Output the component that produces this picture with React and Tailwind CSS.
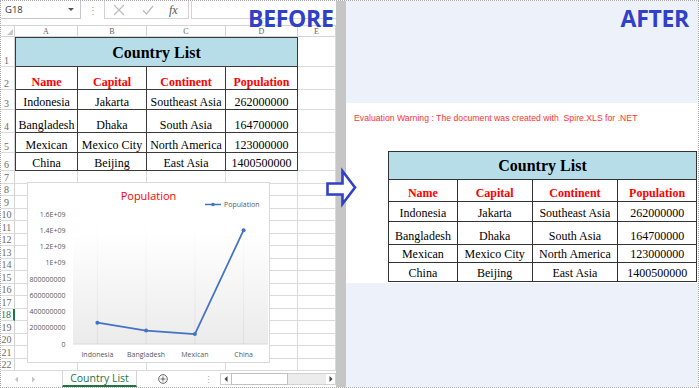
import React from "react";

const SERIF = "font-['Liberation_Serif',serif]";
const SANS = "font-['Open_Sans',sans-serif]";

const COLW = ["w-[63px]", "w-[69px]", "w-[79px]", "w-[72px]"];
const RCOLW = ["w-[69px]", "w-[75px]", "w-[86px]", "w-[79px]"];
const LROWH = ["h-[23px]", "h-[20px]", "h-[23px]", "h-[20px]", "h-[18px]"];
const RROWH = ["h-[22px]", "h-[20px]", "h-[23px]", "h-[18px]", "h-[19px]"];

const HEAD = ["Name", "Capital", "Continent", "Population"];
const DATA = [
  ["Indonesia", "Jakarta", "Southeast Asia", "262000000"],
  ["Bangladesh", "Dhaka", "South Asia", "164700000"],
  ["Mexican", "Mexico City", "North America", "123000000"],
  ["China", "Beijing", "East Asia", "1400500000"],
];

function RowHead({ n, active }) {
  return (
    <div
      className={`w-[14px] shrink-0 border-b border-b-[#dadada] flex items-end justify-center pr-[2px] ${SERIF} text-[10px] leading-[11px] ${
        active ? "border-r-2 border-r-[#217346] text-[#217346]" : "border-r border-r-[#d4d4d4] text-[#6b6b6b]"
      }`}
    >
      {n}
    </div>
  );
}

function FormulaBar() {
  return (
    <div className="h-[25px] shrink-0 flex items-start border-b border-[#d4d4d4]">
      <div className="w-[80px] h-[18px] border-r border-b border-[#c6c6c6] flex items-center pl-[4px] pr-[6px]">
        <span className={`${SANS} text-[9.5px] leading-[12px] text-[#333]`}>G18</span>
        <span className="ml-auto w-0 h-0 border-l-[3px] border-r-[3px] border-t-[3px] border-l-transparent border-r-transparent border-t-[#555]" />
      </div>
      <div className="w-[23px] h-[18px] flex items-center justify-center text-[#a0a0a0] text-[10px] leading-[10px]">⋮</div>
      <div className="w-[85px] h-[18px] border border-t-0 border-[#d4d4d4] flex items-center">
        <svg className="ml-[8px]" width="12" height="12" viewBox="0 0 12 12">
          <path d="M1 1 L11 11 M11 1 L1 11" stroke="#bdbdbd" strokeWidth="1.2" fill="none" />
        </svg>
        <svg className="ml-[17px]" width="12" height="12" viewBox="0 0 12 12">
          <path d="M1 6.5 L4.5 10 L11 2" stroke="#bdbdbd" strokeWidth="1.3" fill="none" />
        </svg>
        <span className={`ml-[15px] ${SERIF} italic text-[12px] leading-[12px] text-[#555]`}>fx</span>
      </div>
      <div className="ml-[2px] flex-1 h-[18px] border-l border-b border-[#d4d4d4]" />
    </div>
  );
}

function ColHeaders() {
  const letters = ["A", "B", "C", "D"];
  return (
    <div className="h-[11px] shrink-0 flex border-b border-[#d4d4d4]">
      <div className="w-[14px] border-r border-[#d4d4d4] flex items-end justify-end pr-[1px] pb-[1px]">
        <span className="w-0 h-0 border-l-[6px] border-t-[6px] border-l-transparent border-t-transparent border-b-0 border-r-0 [border-bottom:6px_solid_#c8c8c8]" />
      </div>
      {letters.map((l, i) => (
        <div
          key={l}
          className={`${COLW[i]} border-r border-[#d4d4d4] flex items-end justify-center ${SERIF} text-[8px] leading-[9px] text-[#666]`}
        >
          {l}
        </div>
      ))}
      <div className={`flex-1 border-r border-[#d4d4d4] flex items-end justify-center ${SERIF} text-[8px] leading-[9px] text-[#666]`}>
        E
      </div>
    </div>
  );
}

function Chart() {
  const ylabels = ["1.6E+09", "1.4E+09", "1.2E+09", "1E+09", "800000000", "600000000", "400000000", "200000000", "0"];
  const cats = ["Indonesia", "Bangladesh", "Mexican", "China"];
  const vals = [262000000, 164700000, 123000000, 1400500000];
  const xs = [70.4, 119.1, 167.9, 216.6];
  const ys = vals.map((v) => 162 - (v / 1.6e9) * 130);
  const pts = xs.map((x, i) => `${x},${ys[i]}`).join(" ");
  return (
    <div className="absolute left-[26px] top-[181px] w-[243px] h-[181px]">
      <svg width="243" height="181" viewBox="0 0 243 181" fontFamily="'Open Sans', sans-serif">
        <defs>
          <linearGradient id="pg" x1="0" y1="0" x2="0" y2="1">
            <stop offset="0" stopColor="#ffffff" />
            <stop offset="0.15" stopColor="#ffffff" />
            <stop offset="1" stopColor="#ebebeb" />
          </linearGradient>
          <linearGradient id="vl" x1="0" y1="0" x2="0" y2="1">
            <stop offset="0" stopColor="#ffffff" />
            <stop offset="1" stopColor="#dcdcdc" />
          </linearGradient>
        </defs>
        <rect x="0.5" y="0.5" width="242" height="180" fill="#ffffff" stroke="#d9d9d9" />
        <rect x="46" y="32" width="195" height="130" fill="url(#pg)" />
        {xs.map((x) => (
          <rect key={x} x={x - 0.5} y="40" width="1" height="122" fill="url(#vl)" />
        ))}
        <line x1="46" y1="162" x2="241" y2="162" stroke="#d9d9d9" strokeWidth="1" />
        <text x="121.5" y="17.5" textAnchor="middle" fontSize="11" fill="#ff0000">
          Population
        </text>
        <line x1="178" y1="22.5" x2="194" y2="22.5" stroke="#4472c4" strokeWidth="1.5" />
        <circle cx="186" cy="22.5" r="1.8" fill="#4472c4" />
        <text x="197" y="25" fontSize="7" fill="#595959">
          Population
        </text>
        {ylabels.map((l, i) => (
          <text key={l} x="38.5" y={32 + i * 16.25 + 2.5} textAnchor="end" fontSize="7" fill="#595959">
            {l}
          </text>
        ))}
        {cats.map((c, i) => (
          <text key={c} x={xs[i]} y="174.5" textAnchor="middle" fontSize="7" fill="#595959">
            {c}
          </text>
        ))}
        <polyline points={pts} fill="none" stroke="#4472c4" strokeWidth="1.75" strokeLinejoin="round" />
        {xs.map((x, i) => (
          <circle key={x} cx={x} cy={ys[i]} r="2" fill="#4472c4" />
        ))}
      </svg>
    </div>
  );
}

function TabBar() {
  return (
    <div className="h-[16px] shrink-0 flex items-stretch bg-white">
      <div className="w-[61px] flex items-center">
        <svg className="ml-[13px]" width="5" height="7" viewBox="0 0 5 7">
          <path d="M4 0.5 L1 3.5 L4 6.5 Z" fill="#c4c4c4" />
        </svg>
        <svg className="ml-[12px]" width="5" height="7" viewBox="0 0 5 7">
          <path d="M1 0.5 L4 3.5 L1 6.5 Z" fill="#c4c4c4" />
        </svg>
      </div>
      <div className={`w-[75px] bg-white border-l border-r border-[#d4d4d4] border-b-2 border-b-[#217346] flex items-center justify-center ${SANS} text-[10.5px] leading-[13px] text-[#217346]`}>
        Country List
      </div>
      <div className="ml-[21px] flex items-center">
        <svg width="10" height="10" viewBox="0 0 10 10">
          <circle cx="5" cy="5" r="4.3" fill="none" stroke="#555" strokeWidth="0.9" />
          <path d="M5 2.5 V7.5 M2.5 5 H7.5" stroke="#555" strokeWidth="0.9" />
        </svg>
      </div>
      <div className="ml-[38px] w-[4px] flex items-center justify-center text-[#a8a8a8] text-[9px] leading-[9px]">⋮</div>
      <div className="ml-[10px] flex-1 flex items-center">
        <div className="h-[12px] flex-1 flex items-stretch">
          <div className="w-[11px] flex items-center justify-center border border-r-0 border-[#d0d0d0] bg-white">
            <svg width="4" height="6" viewBox="0 0 4 6">
              <path d="M3.5 0 L0.5 3 L3.5 6 Z" fill="#444" />
            </svg>
          </div>
          <div className="w-[57px] bg-white border border-[#c0c0c0]" />
          <div className="flex-1 bg-[#ececec] border-t border-b border-[#d0d0d0]" />
          <div className="w-[10px] flex items-center justify-center bg-white border border-l-0 border-[#d0d0d0]">
            <svg width="4" height="6" viewBox="0 0 4 6">
              <path d="M0.5 0 L3.5 3 L0.5 6 Z" fill="#444" />
            </svg>
          </div>
        </div>
      </div>
    </div>
  );
}

function LeftPanel() {
  return (
    <div className="relative w-[335px] shrink-0 h-full flex flex-col bg-white">
      <FormulaBar />
      <ColHeaders />
      <div className="flex h-[30px] shrink-0">
        <RowHead n={1} />
        <div
          className={`w-[283px] border border-[#3a3a3a] bg-[#b7dee8] flex items-center justify-center pt-[2px] ${SERIF} font-bold text-[16px] leading-[18px] text-black`}
        >
          Country List
        </div>
        <div className="flex-1 border-r border-b border-[#dadada]" />
      </div>
      {[HEAD, ...DATA].map((r, i) => (
        <div key={i} className={`flex shrink-0 ${LROWH[i]}`}>
          <RowHead n={i + 2} />
          {r.map((c, j) => (
            <div
              key={j}
              className={`${COLW[j]} ${j === 0 ? "border-l" : ""} border-r border-b border-[#3a3a3a] flex items-end justify-center whitespace-nowrap ${SERIF} text-[12px] leading-[14px] ${
                i === 0 ? "font-bold text-[#ff0000]" : "text-black"
              }`}
            >
              {c}
            </div>
          ))}
          <div className="flex-1 border-r border-b border-[#dadada]" />
        </div>
      ))}
      {Array.from({ length: 16 }).map((_, k) => {
        const n = k + 7;
        return (
          <div key={n} className={`flex shrink-0 ${k % 2 === 0 ? "h-[13px]" : "h-[12px]"}`}>
            <RowHead n={n} active={n === 18} />
            {COLW.map((w, j) => (
              <div key={j} className={`${w} border-r border-b border-[#dadada]`} />
            ))}
            <div className="flex-1 border-r border-b border-[#dadada]" />
          </div>
        );
      })}
      <TabBar />
      <Chart />
      <div className={`absolute left-[247px] top-[9px] ${SANS} font-bold text-[23px] leading-[16px] tracking-[-0.3px] text-[#3040c8]`}>
        BEFORE
      </div>
    </div>
  );
}

function RightPanel() {
  return (
    <div className="flex-1 h-full flex flex-col">
      <div className="h-[102px] shrink-0 bg-[#edf1f9] flex justify-end items-start pr-[9px] pt-[9px]">
        <span className={`${SANS} font-bold text-[23px] leading-[16px] tracking-[-0.3px] text-[#3040c8]`}>AFTER</span>
      </div>
      <div className="h-[180px] shrink-0 bg-white flex flex-col pt-[10px]">
        <div className="pl-[8px] h-[11px] whitespace-pre font-['Liberation_Sans',Arial,sans-serif] text-[8.7px] leading-[11px] text-[#ff3434]">
          Evaluation Warning : The document was created with  Spire.XLS for .NET
        </div>
        <div className="mt-[27px] ml-[42px] w-[309px] flex flex-col border-l border-t border-[#333]">
          <div
            className={`h-[28px] border-r border-b border-[#333] bg-[#b7dee8] flex items-center justify-center ${SERIF} font-bold text-[16px] leading-[18px] text-black`}
          >
            Country List
          </div>
          {[HEAD, ...DATA].map((r, i) => (
            <div key={i} className={`flex ${RROWH[i]}`}>
              {r.map((c, j) => (
                <div
                  key={j}
                  className={`${RCOLW[j]} border-r border-b border-[#333] flex items-end justify-center pb-[1px] whitespace-nowrap ${SERIF} text-[12px] leading-[14px] ${
                    i === 0 ? "font-bold text-[#ff0000]" : "text-black"
                  }`}
                >
                  {c}
                </div>
              ))}
            </div>
          ))}
        </div>
      </div>
      <div className="flex-1 bg-[#edf1f9]" />
    </div>
  );
}

export default function App() {
  return (
    <div className="relative w-[699px] h-[388px] border border-dotted border-[#a8a8a8] flex overflow-hidden bg-white">
      <LeftPanel />
      <div className="w-[10px] shrink-0 h-full bg-[#c6c6c6]" />
      <RightPanel />
      <svg className="absolute left-[319px] top-[164px]" width="45" height="45" viewBox="0 0 45 45">
        <polygon
          points="7.5,18.5 22.5,18.5 22.5,6 35,22.5 22.5,39 22.5,29.5 7.5,29.5"
          fill="#ffffff"
          stroke="#3040c8"
          strokeWidth="2.6"
          strokeLinejoin="miter"
        />
      </svg>
    </div>
  );
}
